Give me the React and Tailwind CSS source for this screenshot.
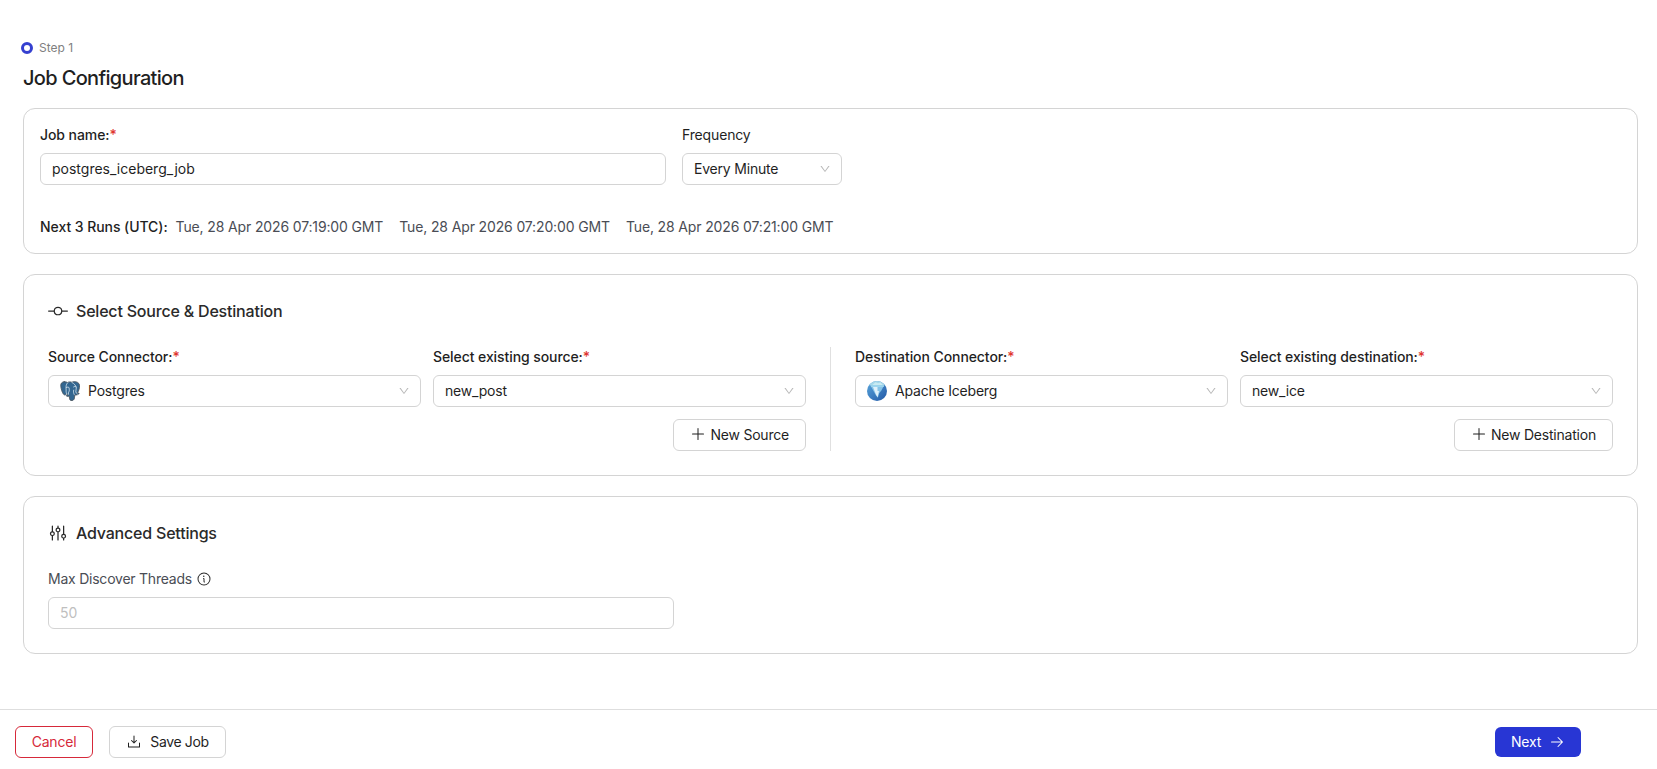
import React, { useState } from 'react';
import { AiOutlineDown } from 'react-icons/ai';
import { PiArrowRight, PiDownloadSimple, PiGitCommit, PiInfo, PiPlus, PiSliders } from 'react-icons/pi';

const NEXT_RUNS = [
    'Tue, 28 Apr 2026 07:19:00 GMT',
    'Tue, 28 Apr 2026 07:20:00 GMT',
    'Tue, 28 Apr 2026 07:21:00 GMT',
];

const PostgresIcon = () => (
    <svg viewBox="0 0 20 20" className="h-5 w-5 shrink-0" fill="none" strokeLinecap="round" strokeLinejoin="round">
        <path
            d="M4.2.7C1.7.9.5 2.6.8 5.2c.3 2.8 1.3 6.2 2.7 8 1 1.2 2 .9 3-.3l1.5.9c-.7.6-1.8.5-1.7 1 .3.7 2 .8 3 .2.1 1.7.1 3 .8 4 .8 1 3.2.7 4-.8.5-1.1.5-2.9.7-4.3 1.6.3 3.7-.2 4.3-1.4.2-.5-1-.3-1.7-.4 1.4-2.3 2.3-5.2 2.1-7.8C19.3 1.8 16.8.5 14 .7c-.9 0-1.6.3-2.3.5C10.2.7 8.7.8 7.5 1.5 6.5 1 5.3.6 4.2.7Z"
            fill="#336791"
            stroke="#4c5862"
            strokeWidth="0.9"
        />
        <g stroke="#e2edf4" strokeWidth="0.75">
            <path d="M7.5 1.9C5.8 3.6 6 6 6.100 7.800c.1 1.700-.3 3 .5 4.800" />
            <path d="M6.200 6.600c1-.8 2.800-.8 2.900.4.100 1.700.6 2.700-.5 4.200l-.3 2.200" />
            <path d="M12 1.500c2.600 1.200 3.900 3.300 4.300 5.300.1 1.800-.7 3-.5 4.200.3.900.9 1.500 1.500 2" />
            <path d="M13.600 5.900c.8-.6 1.900-.6 2.600 0M14.200 13.500c-.7-1.500-1-2.800-.5-4.400" />
        </g>
    </svg>
);

const IcebergIcon = () => (
    <svg viewBox="0 0 20 20" className="h-5 w-5 shrink-0">
        <defs>
            <linearGradient id="sea" x1="0" y1="0" x2="1" y2="1">
                <stop offset="0" stopColor="#5aa6dc" />
                <stop offset="1" stopColor="#2158a6" />
            </linearGradient>
            <clipPath id="globe">
                <circle cx="10" cy="10" r="10" />
            </clipPath>
        </defs>
        <g clipPath="url(#globe)">
            <rect width="20" height="20" fill="url(#sea)" />
            <rect width="20" height="4.2" fill="#a6d8ea" />
            <path d="M5 4.2 8.5 1.2 11 2.2 13.5 1.4 16 4.2Z" fill="#c9ebf2" />
            <path d="M3.4 4.4H17L14.4 9.5 12.3 12 10.8 16.8 9 14.5 6.8 10.5Z" fill="#86c3e8" />
            <path d="M6 6H10.5V10H12L10.5 16.3 9 13.5Z" fill="#dff1fb" />
            <path d="M3.2 4.2H17V5.8H4.2Z" fill="#a5dcf0" />
        </g>
    </svg>
);

const Label = ({ children, required }) => (
    <label className="block h-5 text-sm leading-5 font-medium tracking-[-0.08px] whitespace-nowrap">
        {children}
        {required && <span className="text-[#e0352f]">*</span>}
    </label>
);

const Select = ({ value, icon }) => (
    <button className="flex h-8 w-full items-center rounded-md border border-[#d4d4d4] bg-white pr-[10px] pl-[11px] text-sm tracking-[-0.2px]">
        {icon}
        <span className={icon ? 'ml-2' : ''}>{value}</span>
        <AiOutlineDown className="ml-auto h-3 w-3 text-[#b8b8b8]" />
    </button>
);

const Field = ({ label, value, icon }) => (
    <div className="flex min-w-0 flex-1 flex-col gap-2">
        <Label required>{label}</Label>
        <Select value={value} icon={icon} />
    </div>
);

const NewButton = ({ children }) => (
    <button className="flex h-8 items-center gap-1 self-end rounded-md border border-[#d4d4d4] bg-white px-4 text-sm tracking-[-0.21px]">
        <PiPlus className="mb-0.5 h-4 w-4" />
        {children}
    </button>
);

const SectionTitle = ({ icon, children }) => (
    <div className="mb-6 flex h-6 items-center gap-2 text-base font-medium tracking-[-0.2px] text-[#2a2a2a]">
        {icon}
        <h2>{children}</h2>
    </div>
);

function App() {
    const [jobName, setJobName] = useState('postgres_iceberg_job');
    const [threads, setThreads] = useState('');

    return (
        <div className="flex h-[769px] flex-col bg-white font-['Inter',sans-serif] text-[#1f1f1f]">
            <main className="flex-1 pt-10 pr-[19px] pl-[23px]">
                <div className="-ml-0.5 flex h-4 items-center gap-1.5">
                    <span className="h-3 w-3 rounded-full border-[3px] border-[#3540d0]" />
                    <span className="text-xs text-[#808080]">Step 1</span>
                </div>
                <h1 className="mt-2 text-xl leading-7 font-medium tracking-[-0.66px]">Job Configuration</h1>

                {/* Job details */}
                <section className="mt-4 rounded-xl border border-[#d4d4d4] p-4">
                    <div className="flex gap-4">
                        <div className="flex w-[626px] flex-col gap-2">
                            <Label required>Job name:</Label>
                            <input
                                className="h-8 w-full rounded-md border border-[#d4d4d4] px-[11px] pb-px text-sm outline-none"
                                value={jobName}
                                onChange={(e) => setJobName(e.target.value)}
                            />
                        </div>
                        <div className="flex w-40 flex-col gap-2">
                            <span className="h-5 text-sm leading-5 tracking-[-0.15px]">Frequency</span>
                            <Select value="Every Minute" />
                        </div>
                    </div>
                    <div className="mt-8 flex h-5 items-center text-sm leading-5">
                        <span className="mr-2 font-medium tracking-[-0.06px]">Next 3 Runs (UTC):</span>
                        <div className="flex gap-4 tracking-[-0.14px] text-[#4a4d55]">
                            {NEXT_RUNS.map((run) => (
                                <span key={run}>{run}</span>
                            ))}
                        </div>
                    </div>
                </section>

                {/* Source and destination */}
                <section className="mt-5 rounded-xl border border-[#d4d4d4] p-6">
                    <SectionTitle icon={<PiGitCommit className="h-5 w-5" />}>
                        Select Source &amp; Destination
                    </SectionTitle>
                    <div className="flex gap-6">
                        <div className="flex flex-1 flex-col gap-3">
                            <div className="flex gap-3">
                                <Field label="Source Connector:" value="Postgres" icon={<PostgresIcon />} />
                                <Field label="Select existing source:" value="new_post" />
                            </div>
                            <NewButton>New Source</NewButton>
                        </div>
                        <div className="w-px bg-[#e0e0e0]" />
                        <div className="flex flex-1 flex-col gap-3">
                            <div className="flex gap-3">
                                <Field label="Destination Connector:" value="Apache Iceberg" icon={<IcebergIcon />} />
                                <Field label="Select existing destination:" value="new_ice" />
                            </div>
                            <NewButton>New Destination</NewButton>
                        </div>
                    </div>
                </section>

                {/* Advanced settings */}
                <section className="mt-5 rounded-xl border border-[#d4d4d4] p-6">
                    <SectionTitle icon={<PiSliders className="h-5 w-5" />}>Advanced Settings</SectionTitle>
                    <div className="flex w-[626px] flex-col gap-2">
                        <div className="flex h-5 items-center gap-1 text-sm tracking-[-0.23px] text-[#4a4d55]">
                            Max Discover Threads
                            <PiInfo className="h-4 w-4 text-[#2a2a2a]" />
                        </div>
                        <input
                            className="h-8 w-full rounded-md border border-[#d4d4d4] px-[11px] pb-px text-sm outline-none placeholder:text-[#bfbfbf]"
                            placeholder="50"
                            value={threads}
                            onChange={(e) => setThreads(e.target.value)}
                        />
                    </div>
                </section>
            </main>

            <footer className="flex h-[60px] items-start justify-between border-t border-[#dedede] pt-4 pr-[76px] pl-[15px]">
                <div className="flex gap-4">
                    <button className="h-8 w-[78px] rounded-md border border-[#d6293a] text-sm tracking-[-0.2px] text-[#d6293a]">
                        Cancel
                    </button>
                    <button className="flex h-8 w-[117px] items-center justify-center gap-2 rounded-md border border-[#d4d4d4] text-sm tracking-[-0.35px]">
                        <PiDownloadSimple className="h-4 w-4" />
                        Save Job
                    </button>
                </div>
                <button className="mt-px flex h-[30px] w-[86px] items-center justify-center gap-2 rounded-md bg-[#2836d4] text-sm tracking-[-0.2px] text-white">
                    Next
                    <PiArrowRight className="h-4 w-4" />
                </button>
            </footer>
        </div>
    );
}

export default App;
